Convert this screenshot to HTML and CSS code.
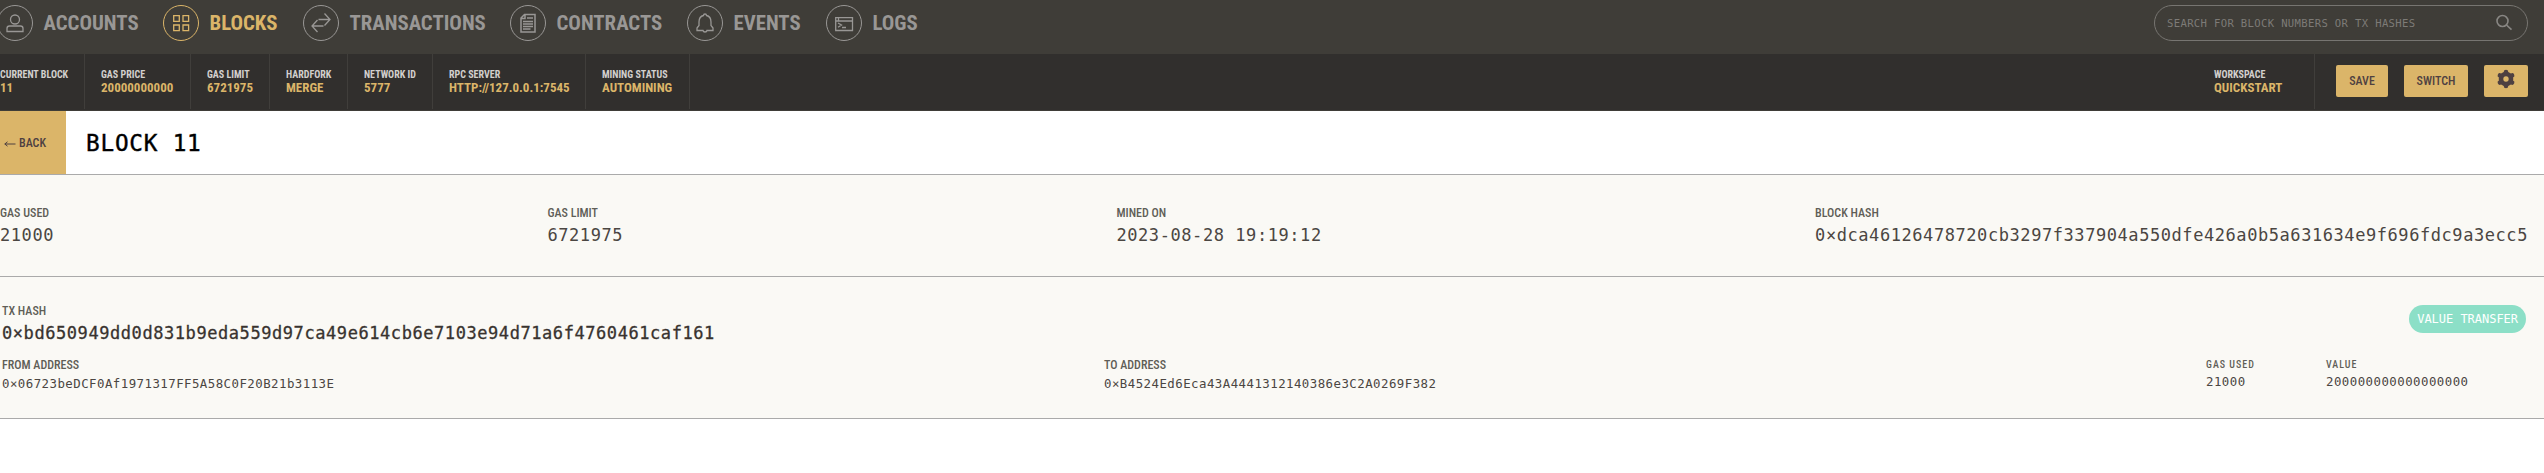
FILE: index.html
```html
<!DOCTYPE html>
<html lang="en">
<head>
<meta charset="utf-8">
<title>Block 11</title>
<link rel="stylesheet" href="styles.css">
</head>
<body>
<header class="topbar">
  <nav class="nav">
    <a class="nav-item n1"><span class="ring"><svg viewBox="0 0 36 36"><circle cx="18" cy="14.500" r="4.500"/><path d="M10 26.500v-3q0-2.500 2.500-2.500h11q2.500 0 2.500 2.500v3z"/></svg></span><span class="cond">ACCOUNTS</span></a>
    <a class="nav-item n2 active"><span class="ring"><svg viewBox="0 0 36 36"><path d="M10.700 10.700h5.600v5.600h-5.600zM20 10.700h5.600v5.600H20zM10.700 20h5.600v5.600h-5.600zM20 20h5.600v5.600H20z"/></svg></span><span class="cond">BLOCKS</span></a>
    <a class="nav-item n3"><span class="ring"><svg viewBox="0 0 36 36"><path d="M15.500 14.500H26.500M21.500 8.500l5.500 6-5.500 6M20.500 21H9.500M14.500 15l-5.500 6 5.500 6"/></svg></span><span class="cond">TRANSACTIONS</span></a>
    <a class="nav-item n4"><span class="ring"><svg viewBox="0 0 36 36"><path stroke-width="1.500" d="M14.500 9.500h10.500v17.500H11V13zM15 9.500V13.500H11M13 16.500h10M13 19h10M13 21.500h10M13 24h7.500M17 13h6"/></svg></span><span class="cond">CONTRACTS</span></a>
    <a class="nav-item n5"><span class="ring"><svg viewBox="0 0 36 36"><path d="M16.500 10.500q0-1.500 1.500-1.500t1.500 1.500q4.500 1 4.500 6.500v3.500l2 2.500v2.500h-6q-.3 1.500-2 1.500t-2-1.500h-6V23l2-2.500V17q0-5.500 4.500-6.500z"/></svg></span><span class="cond">EVENTS</span></a>
    <a class="nav-item n6"><span class="ring"><svg viewBox="0 0 36 36"><path d="M9.700 12.700h16.800v12.800H9.700zM9.700 16h16.800M12.500 13v3M12 18l3.500 2-3.500 2.300M16 22.500h4"/></svg></span><span class="cond">LOGS</span></a>
  </nav>
  <div class="search"><span>SEARCH FOR BLOCK NUMBERS OR TX HASHES</span><svg viewBox="0 0 18 18"><circle cx="7.500" cy="7" r="5.500"/><path d="M11.500 11l5 4.700"/></svg></div>
</header>
<section class="status">
  <div class="cell c1"><b class="cond">CURRENT BLOCK</b><strong class="cond">11</strong></div>
  <div class="cell c2"><b class="cond">GAS PRICE</b><strong class="cond">20000000000</strong></div>
  <div class="cell c3"><b class="cond">GAS LIMIT</b><strong class="cond">6721975</strong></div>
  <div class="cell c4"><b class="cond">HARDFORK</b><strong class="cond">MERGE</strong></div>
  <div class="cell c5"><b class="cond">NETWORK ID</b><strong class="cond">5777</strong></div>
  <div class="cell c6"><b class="cond">RPC SERVER</b><strong class="cond">HTTP://127.0.0.1:7545</strong></div>
  <div class="cell c7"><b class="cond">MINING STATUS</b><strong class="cond">AUTOMINING</strong></div>
  <div class="cell workspace"><b class="cond">WORKSPACE</b><strong class="cond">QUICKSTART</strong></div>
  <div class="actions">
    <button class="btn save"><span class="cond">SAVE</span></button>
    <button class="btn switch"><span class="cond">SWITCH</span></button>
    <button class="btn gear" aria-label="Settings"><svg viewBox="0 0 20 20"><circle cx="10" cy="10" r="5"/><path d="M10 3v1.500M10 15.500V17M3.900 6.500l1.300.7M14.800 12.800l1.300.7M3.900 13.500l1.300-.7M14.800 7.200l1.300-.7"/></svg></button>
  </div>
</section>
<section class="titlebar">
  <button class="back"><svg viewBox="0 0 12 8"><path d="M11.500 4H.8M3.500 1.800L.8 4l2.700 2.200"/></svg><span class="cond">BACK</span></button>
  <h1>BLOCK 11</h1>
</section>
<section class="summary">
  <div class="field"><span class="label cond">GAS USED</span><span class="value">21000</span></div>
  <div class="field"><span class="label cond">GAS LIMIT</span><span class="value">6721975</span></div>
  <div class="field"><span class="label cond">MINED ON</span><span class="value">2023-08-28 19:19:12</span></div>
  <div class="field"><span class="label cond">BLOCK HASH</span><span class="value">0×dca46126478720cb3297f337904a550dfe426a0b5a631634e9f696fdc9a3ecc5</span></div>
</section>
<section class="tx">
  <div class="tx-head">
    <div class="field"><span class="label cond">TX HASH</span><span class="value hash">0×bd650949dd0d831b9eda559d97ca49e614cb6e7103e94d71a6f4760461caf161</span></div>
    <span class="badge">VALUE TRANSFER</span>
  </div>
  <div class="tx-body">
    <div class="field"><span class="label cond">FROM ADDRESS</span><span class="value small">0×06723beDCF0Af1971317FF5A58C0F20B21b3113E</span></div>
    <div class="field"><span class="label cond">TO ADDRESS</span><span class="value small">0×B4524Ed6Eca43A4441312140386e3C2A0269F382</span></div>
    <div class="field mini"><span class="label cond">GAS USED</span><span class="value small">21000</span></div>
    <div class="field mini"><span class="label cond">VALUE</span><span class="value small">200000000000000000</span></div>
  </div>
</section>
</body>
</html>
```
FILE: styles.css
```css
* { box-sizing: border-box; }
body { margin: 0; background: #fff; color: #38332f; font-family: "DejaVu Sans Mono", monospace; overflow: hidden; }
button { border: 0; padding: 0; margin: 0; }
svg { display: block; fill: none; stroke: currentColor; }
.cond { font-family: "Roboto Condensed", Roboto, sans-serif; font-stretch: 75%; white-space: nowrap; display: block; letter-spacing: 0; }

.topbar { height: 54px; background: #3f3d38; display: flex; justify-content: space-between; padding: 5px 16px 0 0; }
.nav { display: flex; margin-left: -3px; }
.nav-item { display: flex; gap: 10.500px; height: 36px; align-items: center; color: #999795; font-size: 20.800px; font-weight: 700; }
.n1 { width: 166px; }
.n2 { width: 140px; }
.n3 { width: 207px; }
.n4 { width: 177px; }
.n5 { width: 139px; }
.n6 { width: 100px; }
.active { color: #dbb569; }
.ring { width: 36px; height: 36px; flex: none; border: 1px solid; border-radius: 50%; }
.ring svg { width: 36px; height: 36px; margin: -1px; stroke-width: 1.300; }
.search { width: 374px; height: 36px; border: 1px solid #777571; border-radius: 18px; display: flex; align-items: center; justify-content: space-between; padding: 0 14px 0 12px; color: #7d7b77; font-size: 10.600px; letter-spacing: .337px; }
.search svg { width: 18px; height: 18px; stroke-width: 1.600; color: #888683; }

.status { height: 57px; background: #312f2d; border-bottom: 1px solid #3f3d38; display: flex; }
.cell { height: 55px; border-right: 1px solid #403e3b; padding: 15px 0 0 16px; }
.cell b, .cell strong { font-weight: 700; }
.cell b { color: #d3d0cd; font-size: 10px; line-height: 12px; }
.cell strong { color: #dbb569; font-size: 13px; line-height: 13px; }
.c1 { width: 85px; padding-left: 0; }
.c2 { width: 106px; }
.c3 { width: 79px; }
.c4 { width: 78px; }
.c5 { width: 85px; }
.c6 { width: 153px; }
.c7 { width: 104px; }
.workspace { width: 117px; margin-left: auto; }
.actions { display: flex; gap: 16px; padding: 11px 16px 0 21px; }
.btn { height: 32px; border-radius: 2px; background: #dbb569; color: #4e4041; display: flex; align-items: center; justify-content: center; font-size: 12px; font-weight: 500; }
.save { width: 52px; }
.switch { width: 64px; }
.gear { width: 44px; padding-bottom: 5px; }
.gear svg { width: 20px; height: 20px; stroke-width: 4.600; stroke-linecap: round; }

.titlebar { height: 64px; border-bottom: 1px solid #aaa; display: flex; }
.back { width: 66px; background: #dbb569; color: #4e4041; display: flex; align-items: center; gap: 3px; padding-left: 4px; font-size: 12px; font-weight: 500; }
.back svg { width: 12px; height: 8px; margin-top: 3px; }
h1 { margin: 0 0 0 20px; color: #000; font-size: 22.700px; letter-spacing: .78px; line-height: 64px; font-weight: 400; -webkit-text-stroke: .4px; }

.summary { height: 102px; background: #faf9f5; border-bottom: 1px solid #aaa; padding: 30px 16px 0 0; display: flex; justify-content: space-between; }
.label { color: #5f5e57; font-size: 12px; line-height: 17px; font-weight: 500; }
.value { display: block; font-size: 17px; letter-spacing: .566px; line-height: 27px; white-space: nowrap; }
.summary .value, .small { color: #4b4642; }
.hash { -webkit-text-stroke: .3px; }
.value.small { font-size: 12.400px; letter-spacing: .455px; line-height: 20px; }

.tx { height: 142px; background: #faf9f5; border-bottom: 1px solid #aaa; padding: 26px 18px 0 2px; }
.tx-head { height: 54px; display: flex; justify-content: space-between; }
.badge { height: 28px; margin-top: 2px; padding: 0 8px; border-radius: 14px; background: #8cdfc7; color: #fff; font-size: 12px; letter-spacing: -.025px; line-height: 28px; }
.tx-body { display: grid; grid-template-columns: 1102px 1102px 120px 1fr; }
.mini .label { font-size: 10px; letter-spacing: 1px; line-height: 15px; }
```
